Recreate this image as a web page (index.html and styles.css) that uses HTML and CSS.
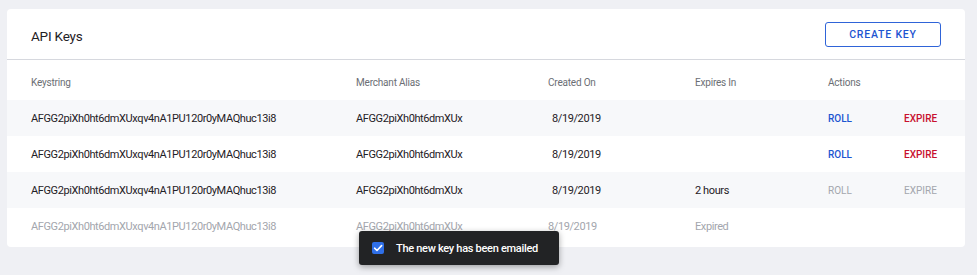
FILE: index.html
```html
<!DOCTYPE html>
<html lang="en">
<head>
    <meta charset="UTF-8">
    <title>API Keys</title>
    <link rel="stylesheet" href="styles.css">
</head>
<body>
    <div class="card">
        <div class="card-header">
            <h2>API Keys</h2>
            <button class="btn-outline">CREATE KEY</button>
        </div>

        <div class="row head">
            <div>Keystring</div>
            <div>Merchant Alias</div>
            <div>Created On</div>
            <div>Expires In</div>
            <div>Actions</div>
            <div></div>
        </div>
        <div class="row striped">
            <div>AFGG2piXh0ht6dmXUxqv4nA1PU120r0yMAQhuc13i8</div>
            <div>AFGG2piXh0ht6dmXUx</div>
            <div class="date">8/19/2019</div>
            <div></div>
            <div class="act roll">ROLL</div>
            <div class="act expire">EXPIRE</div>
        </div>
        <div class="row">
            <div>AFGG2piXh0ht6dmXUxqv4nA1PU120r0yMAQhuc13i8</div>
            <div>AFGG2piXh0ht6dmXUx</div>
            <div class="date">8/19/2019</div>
            <div></div>
            <div class="act roll">ROLL</div>
            <div class="act expire">EXPIRE</div>
        </div>
        <div class="row striped">
            <div>AFGG2piXh0ht6dmXUxqv4nA1PU120r0yMAQhuc13i8</div>
            <div>AFGG2piXh0ht6dmXUx</div>
            <div class="date">8/19/2019</div>
            <div>2 hours</div>
            <div class="act off">ROLL</div>
            <div class="act off">EXPIRE</div>
        </div>
        <div class="row expired">
            <div>AFGG2piXh0ht6dmXUxqv4nA1PU120r0yMAQhuc13i8</div>
            <div>AFGG2piXh0ht6dmXUx</div>
            <div>8/19/2019</div>
            <div>Expired</div>
            <div></div>
            <div></div>
        </div>
    </div>

    <!-- toast -->
    <div class="toast">
        <span class="check">
            <svg width="12" height="12" viewBox="0 0 12 12">
                <path d="M2.6 6.2 L5 8.5 L9.6 3.6" fill="none" stroke="#fff" stroke-width="1.6" stroke-linecap="round" stroke-linejoin="round"/>
            </svg>
        </span>
        The new key has been emailed
    </div>
</body>
</html>
```

FILE: styles.css
```css
body {
    margin: 0;
    padding: 9px 12px 28px 7px;
    background-color: #eff0f4;
    font-family: Roboto, "Liberation Sans", sans-serif;
    color: #1f2126;
}

.card {
    background-color: white;
    border-radius: 4px;
    padding-bottom: 3px;
}

.card-header {
    display: flex;
    justify-content: space-between;
    align-items: center;
    height: 50px;
    padding: 0 24px;
    border-bottom: 1px solid #d6d8de;
}

.card-header h2 {
    margin: 0;
    padding-top: 4px;
    font-size: 13.5px;
    font-weight: 400;
    letter-spacing: -0.2px;
    color: #1f2126;
}

.btn-outline {
    width: 116px;
    height: 25px;
    background: white;
    border: 1px solid #2f64d8;
    border-radius: 3px;
    color: #1d55d1;
    font-family: inherit;
    font-size: 10.5px;
    font-weight: 500;
    letter-spacing: 0.8px;
    cursor: pointer;
}

.row {
    display: grid;
    grid-template-columns: 325px 192px 147px 133px 76px 1fr;
    align-items: center;
    height: 36px;
    padding-left: 24px;
    font-size: 11px;
    letter-spacing: -0.4px;
}

.row.head {
    height: 36px;
    padding-top: 4px;
    font-size: 10px;
    letter-spacing: -0.2px;
    color: #6b6e74;
}

.row.striped {
    background-color: #f7f8fa;
}

.row.expired {
    color: #a3a6ad;
}

.date {
    padding-left: 4px;
}

.act {
    font-size: 10px;
    font-weight: 500;
    letter-spacing: 0;
}

.roll {
    color: #1d55d1;
}

.expire {
    color: #c8102e;
}

.off {
    color: #a3a6ad;
    font-weight: 400;
}

.toast {
    position: absolute;
    left: 359px;
    top: 231px;
    width: 200px;
    height: 34px;
    box-sizing: border-box;
    display: flex;
    align-items: center;
    gap: 12px;
    padding-left: 13px;
    background-color: #222325;
    border-radius: 3px;
    box-shadow: 0 2px 6px rgba(0, 0, 0, 0.35);
    color: white;
    font-size: 11px;
    font-weight: 500;
    letter-spacing: -0.3px;
}

.check {
    display: flex;
    align-items: center;
    justify-content: center;
    width: 12px;
    height: 12px;
    background-color: #2f6fe8;
    border-radius: 2px;
}
```
